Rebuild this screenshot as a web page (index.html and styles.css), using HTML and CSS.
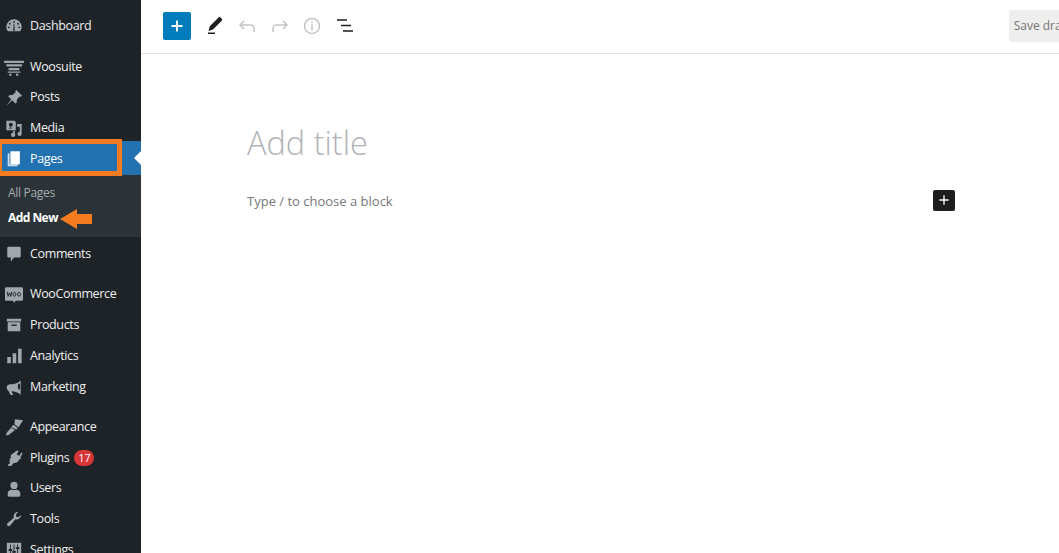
FILE: index.html
```html
<!DOCTYPE html>
<html lang="en">
<head>
<meta charset="utf-8">
<title>Add New Page</title>
<link rel="stylesheet" href="styles.css">
</head>
<body>
<div class="app">
  <nav class="sidebar">
    <a class="row"><svg class="ico" viewBox="0 0 20 20"><path d="M10 2.500a8.500 8.500 0 0 0-7.600 12.300c.3.600.8 1 1.500 1h12.200c.7 0 1.200-.4 1.500-1A8.500 8.500 0 0 0 10 2.500z"/><g class="cut"><circle cx="10" cy="5.500" r="1"/><circle cx="5.500" cy="7.500" r="1"/><circle cx="14.500" cy="7.500" r="1"/><circle cx="4.300" cy="11.500" r="1"/><circle cx="15.700" cy="11.500" r="1"/><path d="M9.300 13.500l.3-6h.8l.3 6a1 1 0 1 1-1.400 0z"/></g></svg><span>Dashboard</span></a>
    <a class="row sep"><svg class="ico wide" viewBox="0 0 20 20"><path d="M-1 3h22v2.500H-1zM1.500 7H19v2.500H1.500zM4 11h12v2.500H4zM3 15h14v1.500H3z"/><circle cx="6" cy="18.500" r="1.400"/><circle cx="13.500" cy="18.500" r="1.400"/></svg><span>Woosuite</span></a>
    <a class="row"><svg class="ico" viewBox="0 0 20 20"><path d="M12.500 1L19 7.500l-1.500 1-1.200-.3L13 12c.5 1.800 0 3.200-1 4.500l-4-4-6.500 6L7 11.500 3.500 8C4.800 7 6.200 6.500 8 7l3.800-3.300-.3-1.200z"/></svg><span>Posts</span></a>
    <a class="row"><svg class="ico" viewBox="0 0 20 20"><path d="M1.500 2h9.500l1 2v8.500H1.500z"/><circle class="cut" cx="6.500" cy="6.500" r="2.200"/><path class="cut" d="M3.500 11l2.500-2 2 1.500H3.500z"/><path d="M13.500 5.500h5v11a2.300 2.300 0 1 1-2-2.200V8.500l-3 .5zM11 13v3.500a2.300 2.300 0 1 1-2-1.200V13z"/></svg><span>Media</span></a>
    <a class="row current"><svg class="ico" viewBox="0 0 20 20"><path class="back" d="M3 3.500h2V16h9v2H3z"/><path d="M6 1.500h10.500v13.500c0 .8-.5 1-1 1H6z"/></svg><span>Pages</span></a>
    <div class="submenu">
      <a class="subitem">All Pages</a>
      <a class="subitem active">Add New</a>
    </div>
    <a class="row after-sub"><svg class="ico" viewBox="0 0 20 20"><path d="M4 2h12c.8 0 1.500.7 1.500 1.500v9c0 .8-.7 1.500-1.500 1.500h-6l-3.500 4.500V14H4c-.8 0-1.500-.7-1.500-1.500v-9C2.500 2.700 3.200 2 4 2z"/></svg><span>Comments</span></a>
    <a class="row sep"><svg class="ico wide" viewBox="0 0 20 20"><path d="M1.500 1.500h17c1 0 1.500.7 1.500 1.500v12c0 1-.6 1.500-1.500 1.500H12l-2 2.500-1-2.500H1.500C.5 16.500 0 16 0 15V3c0-.8.6-1.500 1.500-1.500z"/><path class="line" d="M2.500 6.500l1 5 1.500-4 1.500 4 1-5M10.500 7a1.500 2.200 0 1 0 .1 0zM15.500 7a1.500 2.200 0 1 0 .1 0z"/></svg><span>WooCommerce</span></a>
    <a class="row"><svg class="ico" viewBox="0 0 20 20"><path d="M2 3h16v3H2zM3 7h14v10H3z"/><path class="cut" d="M7 9.500h6V11H7z"/></svg><span>Products</span></a>
    <a class="row"><svg class="ico" viewBox="0 0 20 20"><path d="M2.500 11h4v7h-4zM8.500 7h4v11h-4zM14.500 2h4v16h-4z"/></svg><span>Analytics</span></a>
    <a class="row"><svg class="ico" viewBox="0 0 20 20"><path d="M17.500 2.500c-2 2.500-5.500 4-9.500 4.500H5a4 4 0 0 0-1 7.500l2.200 4.500h3l-2-4.200c4 .2 7.800 1.500 10.300 3.700z"/><ellipse class="cut" cx="15.600" cy="9.500" rx="1.300" ry="3.500"/></svg><span>Marketing</span></a>
    <a class="row sep"><svg class="ico" viewBox="0 0 20 20"><path d="M11 1.500l9 1-5 8-4.500-3.500zM9.500 7.500l4.500 3.500-1.500 2-5.500-3zM7 10.500l4 3-7 5.500-3 .5 1-3.500z"/></svg><span>Appearance</span></a>
    <a class="row"><svg class="ico" viewBox="0 0 20 20"><path d="M13.500 1.500l1.500 1-2 3.500 3 1.500 2-3.500 1.500 1-2.500 4.500 1 .5-1 1.500-1-.5c-1 3-3.500 5-6.500 4.500L7 19l-4-.5.500-1.500 2-1c-1-2.500-.500-5 1.500-7L6 8l1-1.500z"/></svg><span>Plugins</span><b class="badge">17</b></a>
    <a class="row"><svg class="ico" viewBox="0 0 20 20"><circle cx="10" cy="6" r="4"/><path d="M3 17.500v-3c0-2 2.500-3.500 4.500-4a5 5 0 0 0 5 0c2 .5 4.500 2 4.500 4v3c0 .5-.5 1-1.500 1h-11C3.500 18.500 3 18 3 17.500z"/></svg><span>Users</span></a>
    <a class="row"><svg class="ico" viewBox="0 0 20 20"><path d="M18 5.500a5 5 0 0 1-6.500 4.700L5.500 17.500a2 2 0 0 1-3-2.500l7.300-6.500A5 5 0 0 1 15 2l-3 3 .5 2.500L15 8z"/></svg><span>Tools</span></a>
    <a class="row"><svg class="ico" viewBox="0 0 20 20"><path d="M2 2h16v16H2z"/><path class="cut" d="M5.500 4h1v5h1.500v2H6.500v5h-1v-5H4V9h1.500zM13.500 4h1v3H16v2h-1.500v7h-1V9H12V7h1.500zM9.500 4h1v7H12v2h-1.500v3h-1v-3H8v-2h1.500z"/></svg><span>Settings</span></a>
    <i class="frame"></i>
    <svg class="pointer" viewBox="0 0 32 20"><path d="M0 10L17 0v5h15v10H17v5z"/></svg>
  </nav>
  <main class="main">
    <header class="toolbar">
      <button class="add" aria-label="Add block"><svg viewBox="0 0 24 24"><path d="M11 6h2v5h5v2h-5v5h-2v-5H6v-2h5z"/></svg></button>
      <svg class="tool dark" viewBox="0 0 24 24"><path d="M16.500 3.500c.7-.6 1.500-.6 2 0l1.200 1.200c.6.6.6 1.400 0 2L11 15.500l-4.500 1.500 1.300-4.800zM6 18.500h7V20H6z"/></svg>
      <svg class="tool stroke" viewBox="0 0 24 24"><path d="M9 7l-4 4 4 4M5 11h10.500a3.500 3.500 0 0 1 3.500 3.500V18"/></svg>
      <svg class="tool stroke" viewBox="0 0 24 24"><path d="M15 7l4 4-4 4M19 11H8.500A3.500 3.500 0 0 0 5 14.500V18"/></svg>
      <svg class="tool stroke" viewBox="0 0 24 24"><circle cx="12" cy="12" r="7.500"/><path d="M12 10.500v6M12 7.500v1.700"/></svg>
      <svg class="tool dark" viewBox="0 0 24 24"><path d="M4 5.200h10v1.500H4zM8 10.700h10v1.500H8zM10 16.200h10v1.500H10z"/></svg>
      <button class="save">Save draft</button>
    </header>
    <section class="editor">
      <h1 class="title">Add title</h1>
      <div class="block">
        <p class="hint">Type / to choose a block</p>
        <button class="inserter" aria-label="Add block"><svg viewBox="0 0 24 24"><path d="M11 5h2v6h6v2h-6v6h-2v-6H5v-2h6z"/></svg></button>
      </div>
    </section>
  </main>
</div>
</body>
</html>
```
FILE: styles.css
```css
* { box-sizing: border-box; }
html, body { margin: 0; height: 100%; overflow: hidden; background: #fff; }
.app { display: flex; height: 553px; overflow: hidden; }

.sidebar {
  position: relative;
  flex: 0 0 141px;
  height: 553px;
  overflow: hidden;
  padding-top: 11.100px;
  background: #1d2327;
  font: 12.500px/1 "Open Sans", "Noto Sans", sans-serif;
  letter-spacing: -.36px;
  color: #f0f0f1;
}
.row { display: flex; align-items: center; gap: 7px; height: 30.750px; padding-left: 5px; }
.sep { margin-top: 9.600px; }
.ico { flex: 0 0 18px; width: 18px; height: 18px; fill: #a2a7ab; }
.wide { overflow: visible; }
.cut { fill: #1d2327; }
.line { fill: none; stroke: #1d2327; stroke-width: 1.100; }
.current {
  height: 34px;
  margin-top: -2.300px;
  padding-top: 2px;
  background: #2271b1;
  color: #fff;
  position: relative;
}
.current .ico { fill: #fff; }
.current .back { fill: #cfe0ee; }
.current::after {
  content: "";
  position: absolute;
  right: 0;
  top: 10px;
  border: 7px solid transparent;
  border-left-width: 0;
  border-right-color: #fff;
}
.submenu {
  display: flex;
  flex-direction: column;
  height: 62px;
  padding: 5px 8px 0;
  background: #2c3338;
  font-size: 12px;
  letter-spacing: -.3px;
  color: #a7aaad;
}
.subitem { height: 25px; display: flex; align-items: center; }
.active { color: #fff; font-weight: 700; letter-spacing: -.55px; }
.after-sub { margin-top: 1.400px; }
.badge {
  display: inline-block;
  min-width: 20px;
  height: 16px;
  margin-left: -2px;
  border-radius: 8px;
  background: #d63638;
  color: #fff;
  font: 400 10.500px/16px "Open Sans", sans-serif;
  letter-spacing: 0;
  text-align: center;
}
.frame {
  position: absolute;
  left: -3px;
  top: 139px;
  width: 125px;
  height: 37px;
  border: 5px solid #f47b20;
}
.pointer { position: absolute; left: 60px; top: 209px; width: 32px; height: 20px; fill: #f47b20; }

.main { flex: 1 1 auto; min-width: 0; overflow: hidden; }
.toolbar {
  display: flex;
  align-items: center;
  height: 54px;
  padding: 0 0 2px 22px;
  border-bottom: 1px solid #e0e0e0;
  white-space: nowrap;
}
.add {
  display: flex;
  flex: 0 0 28px;
  align-items: center;
  justify-content: center;
  width: 28px;
  height: 28px;
  padding: 0;
  border: 0;
  border-radius: 2px;
  background: #007cba;
}
.add svg { width: 22px; height: 22px; fill: #fff; }
.tool { flex: 0 0 24px; width: 24px; height: 24px; margin-left: 8.800px; }
.add + .tool { margin-left: 11px; }
.dark { fill: #1e1e1e; }
.stroke { fill: none; stroke: #c4c4c4; stroke-width: 1.500; }
.save {
  flex: 0 0 auto;
  height: 32px;
  margin-left: auto;
  margin-right: -21px;
  padding: 0 10px 0 5px;
  border: 0;
  border-radius: 2px;
  background: #eee;
  color: #757575;
  font: 12px "Open Sans", sans-serif;
}
.editor { display: flex; flex-direction: column; padding: 66px 0 0 106px; width: 814px; }
.title {
  margin: 0;
  font: 300 32.500px/46px "Open Sans", sans-serif;
  color: #b0b3b8;
}
.block { display: flex; align-items: center; justify-content: space-between; margin-top: 23px; height: 22px; }
.hint { margin: 0; padding-top: 2px; font: 13px "Open Sans", sans-serif; color: #75787d; }
.inserter {
  display: flex;
  align-items: center;
  justify-content: center;
  width: 22px;
  height: 21px;
  padding: 0;
  border: 0;
  border-radius: 2px;
  background: #1e1e1e;
}
.inserter svg { width: 16px; height: 16px; fill: #fff; }
```
